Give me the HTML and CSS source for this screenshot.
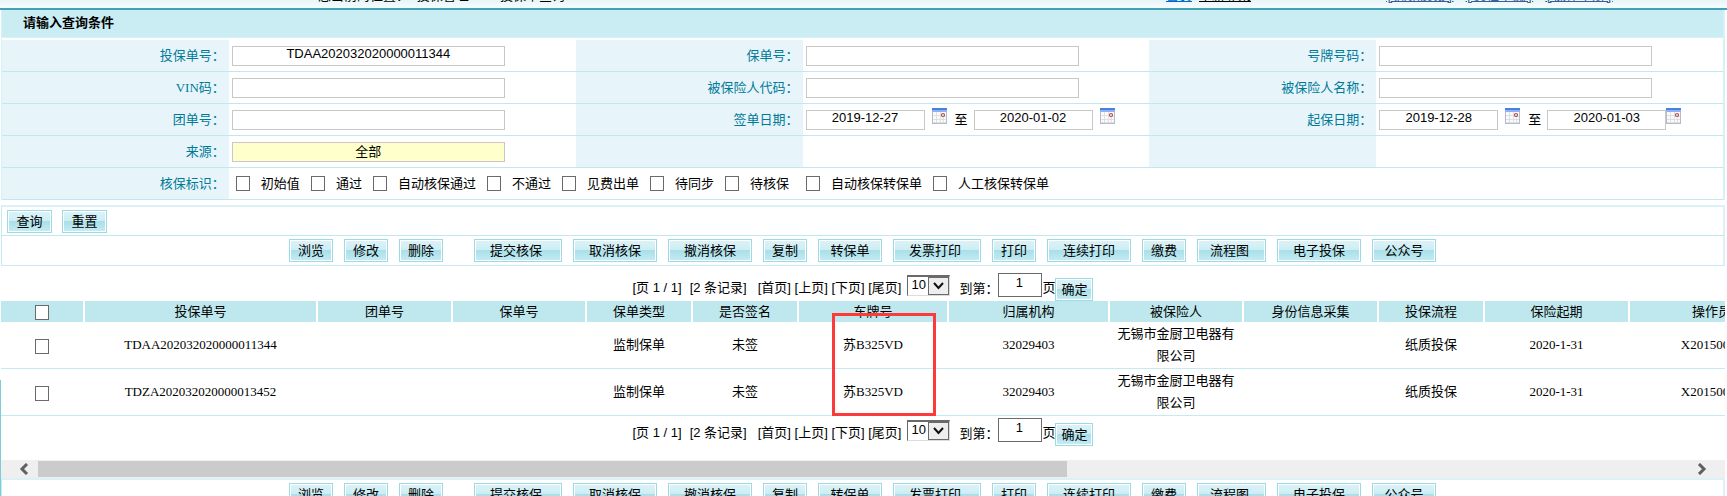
FILE: index.html
```html
<!DOCTYPE html>
<html lang="zh-CN">
<head>
  <meta charset="UTF-8">
  <meta name="viewport" content="width=device-width, initial-scale=1.0">
  <title>投保单查询</title>
  <link rel="stylesheet" href="styles.css">
</head>
<body>
  <svg class="defs" aria-hidden="true">
    <symbol id="calendar" viewBox="0 0 15 16">
      <rect width="15" height="16" fill="#b4bccb"/>
      <rect x="1" y="3" width="13" height="12" fill="#e0e0e0"/>
      <path d="M1 4h3v3H1zM5 4h3v3H5zM9 4h5v4H9zM1 8h3v3H1zM5 8h3v3H5zM9 9h2v2H9zM12 9h2v2h-2zM1 12h3v2H1zM5 12h3v2H5zM9 12h2v2H9zM12 12h2v2h-2z" fill="#fafafa"/>
      <rect width="15" height="2" fill="#4a80e4"/>
      <rect y="2" width="15" height="2" fill="#8db2f2"/>
      <circle cx="11" cy="7" r="1.500" fill="#fff" stroke="#b04a4a" stroke-width="1.200"/>
    </symbol>
  </svg>

  <div class="topbar">
    <div class="location">您当前的位置： 投保管理 &gt;&gt; 投保单查询</div>
    <div class="nav"><a href="#" class="home">首页</a><a href="#" class="relogin">重新登录</a></div>
    <div class="links"><a href="#">[意见反馈]</a><a href="#">[文档下载]</a><a href="#">[操作手册]</a></div>
  </div>

  <form class="panel">
    <h1 class="panel-title">请输入查询条件</h1>
    <div class="grid">
      <label class="name" for="proposalNo">投保单号：</label>
      <div class="value"><input class="text" id="proposalNo" type="text" value="TDAA202032020000011344"></div>
      <label class="name" for="policyNo">保单号：</label>
      <div class="value"><input class="text" id="policyNo" type="text"></div>
      <label class="name" for="plateNo">号牌号码：</label>
      <div class="value"><input class="text" id="plateNo" type="text"></div>

      <label class="name" for="vin"><span class="latin">VIN</span>码：</label>
      <div class="value"><input class="text" id="vin" type="text"></div>
      <label class="name" for="insuredCode">被保险人代码：</label>
      <div class="value"><input class="text" id="insuredCode" type="text"></div>
      <label class="name" for="insuredName">被保险人名称：</label>
      <div class="value"><input class="text" id="insuredName" type="text"></div>

      <label class="name" for="groupNo">团单号：</label>
      <div class="value"><input class="text" id="groupNo" type="text"></div>
      <label class="name" for="signStart">签单日期：</label>
      <div class="value">
        <input class="text date" id="signStart" type="text" value="2019-12-27">
        <svg class="cal"><use href="#calendar"/></svg>
        <label class="to" for="signEnd">至</label>
        <input class="text date" id="signEnd" type="text" value="2020-01-02">
        <svg class="cal"><use href="#calendar"/></svg>
      </div>
      <label class="name" for="startFrom">起保日期：</label>
      <div class="value">
        <input class="text date" id="startFrom" type="text" value="2019-12-28">
        <svg class="cal"><use href="#calendar"/></svg>
        <label class="to" for="startTo">至</label>
        <input class="text date" id="startTo" type="text" value="2020-01-03">
        <svg class="cal tight"><use href="#calendar"/></svg>
      </div>

      <label class="name" for="source">来源：</label>
      <div class="value"><input class="text source" id="source" type="text" value="全部"></div>
      <div class="name"></div>
      <div class="value"></div>
      <div class="name"></div>
      <div class="value"></div>

      <div class="name">核保标识：</div>
      <div class="value flags">
        <label><input type="checkbox">初始值</label>
        <label><input type="checkbox">通过</label>
        <label><input type="checkbox">自动核保通过</label>
        <label><input type="checkbox">不通过</label>
        <label><input type="checkbox">见费出单</label>
        <label><input type="checkbox">待同步</label>
        <label class="wide"><input type="checkbox">待核保</label>
        <label><input type="checkbox">自动核保转保单</label>
        <label><input type="checkbox">人工核保转保单</label>
      </div>
    </div>
  </form>

  <div class="toolbar">
    <div class="query">
      <button type="button" class="btn">查询</button>
      <button type="button" class="btn">重置</button>
    </div>
    <div class="actions">
      <button type="button" class="btn">浏览</button>
      <button type="button" class="btn">修改</button>
      <button type="button" class="btn last">删除</button>
      <button type="button" class="btn w4 trail">提交核保</button>
      <button type="button" class="btn w4">取消核保</button>
      <button type="button" class="btn w4">撤消核保</button>
      <button type="button" class="btn">复制</button>
      <button type="button" class="btn w3">转保单</button>
      <button type="button" class="btn w4 trail">发票打印</button>
      <button type="button" class="btn">打印</button>
      <button type="button" class="btn w4">连续打印</button>
      <button type="button" class="btn">缴费</button>
      <button type="button" class="btn w3 trail">流程图</button>
      <button type="button" class="btn w4">电子投保</button>
      <button type="button" class="btn w3">公众号</button>
    </div>
  </div>

  <div class="result">
    <div class="pager pager-top">
      <span class="count">[页 1 / 1]</span>
      <span class="total">[2 条记录]</span>
      <span class="pages">[首页] [上页] [下页] [尾页]</span>
      <select aria-label="每页条数"><option>10</option></select>
      <label class="goto" for="pageTop">到第：</label>
      <input class="page" id="pageTop" type="text" value="1">
      <span>页</span>
      <button type="button" class="btn ok">确定</button>
    </div>

    <div class="table-wrap">
      <table>
        <colgroup>
          <col class="c-check"><col class="c-proposal"><col class="c-group"><col class="c-policy">
          <col class="c-small"><col class="c-small"><col class="c-plate"><col class="c-org">
          <col class="c-policy"><col class="c-group"><col class="c-small"><col class="c-start"><col class="c-user">
        </colgroup>
        <thead>
          <tr>
            <th><input type="checkbox" aria-label="全选"></th>
            <th>投保单号</th>
            <th>团单号</th>
            <th>保单号</th>
            <th>保单类型</th>
            <th>是否签名</th>
            <th>车牌号</th>
            <th>归属机构</th>
            <th>被保险人</th>
            <th>身份信息采集</th>
            <th>投保流程</th>
            <th>保险起期</th>
            <th>操作员</th>
          </tr>
        </thead>
        <tbody>
          <tr>
            <td><input type="checkbox" aria-label="选择"></td>
            <td>TDAA202032020000011344</td>
            <td></td>
            <td></td>
            <td>监制保单</td>
            <td>未签</td>
            <td>苏B325VD</td>
            <td>32029403</td>
            <td>无锡市金厨卫电器有限公司</td>
            <td></td>
            <td>纸质投保</td>
            <td>2020-1-31</td>
            <td>X20150001</td>
          </tr>
          <tr>
            <td><input type="checkbox" aria-label="选择"></td>
            <td>TDZA202032020000013452</td>
            <td></td>
            <td></td>
            <td>监制保单</td>
            <td>未签</td>
            <td>苏B325VD</td>
            <td>32029403</td>
            <td>无锡市金厨卫电器有限公司</td>
            <td></td>
            <td>纸质投保</td>
            <td>2020-1-31</td>
            <td>X20150001</td>
          </tr>
        </tbody>
      </table>
      <div class="mark"></div>
    </div>

    <div class="pager pager-bottom">
      <span class="count">[页 1 / 1]</span>
      <span class="total">[2 条记录]</span>
      <span class="pages">[首页] [上页] [下页] [尾页]</span>
      <select aria-label="每页条数"><option>10</option></select>
      <label class="goto" for="pageBottom">到第：</label>
      <input class="page" id="pageBottom" type="text" value="1">
      <span>页</span>
      <button type="button" class="btn ok">确定</button>
    </div>

    <div class="scrollbar">
      <svg class="arrow" viewBox="0 0 10 12"><path d="M8 1L3 6l5 5"/></svg>
      <div class="track"><div class="thumb"></div></div>
      <svg class="arrow" viewBox="0 0 10 12"><path d="M2 1l5 5-5 5"/></svg>
    </div>
    <div class="side-line"></div>
  </div>

  <div class="toolbar bottom">
    <div class="actions">
      <button type="button" class="btn">浏览</button>
      <button type="button" class="btn">修改</button>
      <button type="button" class="btn last">删除</button>
      <button type="button" class="btn w4 trail">提交核保</button>
      <button type="button" class="btn w4">取消核保</button>
      <button type="button" class="btn w4">撤消核保</button>
      <button type="button" class="btn">复制</button>
      <button type="button" class="btn w3">转保单</button>
      <button type="button" class="btn w4 trail">发票打印</button>
      <button type="button" class="btn">打印</button>
      <button type="button" class="btn w4">连续打印</button>
      <button type="button" class="btn">缴费</button>
      <button type="button" class="btn w3 trail">流程图</button>
      <button type="button" class="btn w4">电子投保</button>
      <button type="button" class="btn w3">公众号</button>
    </div>
  </div>
</body>
</html>
```
FILE: styles.css
```css
* {
  box-sizing: border-box;
}
html {
  height: 100%;
  overflow: hidden;
}
body {
  margin: 0;
  height: 100%;
  overflow: hidden;
  background-color: white;
  color: black;
  font-family: "Liberation Sans", "Noto Sans CJK SC", sans-serif;
  font-size: 13px;
  line-height: 20px;
}
.defs {
  display: none;
}
input, select, button {
  margin: 0;
  font: inherit;
  color: inherit;
}

/* top bar, scrolled almost out of view */
.topbar {
  display: flex;
  align-items: flex-end;
  height: 10px;
  padding-bottom: 1px;
  overflow: hidden;
  background: linear-gradient(#e6f5f8, #f8fdfe);
  border-bottom: 2px solid #3fa3b3;
  font-family: "Liberation Mono", "Noto Sans CJK SC", monospace;
}
.location {
  width: 1166px;
  padding-left: 318px;
}
.nav {
  display: flex;
  gap: 7px;
  width: 220px;
}
.links {
  display: flex;
  gap: 12px;
}
.links a {
  color: #3b5f93;
}
.home {
  color: #0066cc;
}
.relogin {
  color: black;
}

/* query form */
.panel {
  margin: 0 2px 0 1px;
  border: solid #d8f1f6;
  border-width: 0 2px 0 1px;
}
.panel-title {
  margin: 0 0 2px;
  padding: 3px 0 4px 21px;
  border-bottom: 1px solid #d8f1f6;
  background-color: #caecf3;
  font-size: 13px;
  line-height: 20px;
}
.grid {
  display: grid;
  grid-template-columns: 227fr 347fr 227fr 347fr 227fr 347fr;
  grid-auto-rows: 32px;
}
.name {
  display: flex;
  align-items: center;
  justify-content: flex-end;
  padding-right: 4px;
  border-bottom: 1px solid #bfe8ef;
  background-color: #e7f5fa;
  color: #007a99;
}
.latin {
  font-family: "Liberation Serif", serif;
}
.value {
  display: flex;
  align-items: center;
  padding-left: 3px;
  border-bottom: 1px solid #bfe8ef;
}
.text {
  width: 273px;
  height: 20px;
  padding: 0 0 3px;
  border: 1px solid #c8c8c8;
  background-color: white;
  text-align: center;
}
.source {
  background-color: #ffffcc;
  padding: 0;
}
.date {
  width: 119px;
}
.cal {
  width: 15px;
  height: 16px;
  margin: 0 8px 8px 7px;
}
.cal.tight {
  margin-left: 0;
}
.to {
  margin-right: 6px;
}
.flags {
  grid-column: span 5;
  gap: 11px;
  padding-left: 7px;
}
.flags label {
  display: flex;
  align-items: center;
  gap: 11px;
}
.flags .wide {
  margin-right: 6px;
}
input[type="checkbox"] {
  appearance: none;
  width: 14px;
  height: 15px;
  border: 1px solid #6a6a6a;
  background-color: white;
  vertical-align: middle;
}
input[type="checkbox"]:checked {
  background-color: #3fa3b3;
}

/* buttons */
.toolbar {
  margin: 5px 2px 0 1px;
  border: 1px solid #c6eaf1;
  border-top: 2px solid #dcf1f7;
  border-right: 2px solid #dcf1f7;
}
.query {
  display: flex;
  gap: 10px;
  padding: 3px 5px 2px;
  border-bottom: 1px solid #bfe8ef;
}
.actions {
  display: flex;
  justify-content: center;
  gap: 11px;
  padding: 3px 0;
}
.btn {
  flex: none;
  width: 44px;
  height: 23px;
  padding: 0;
  border: 1px solid #9adbe5;
  background: linear-gradient(#dcf3f8 0, #cdeef4 45%, #a9dfe9 50%, #c6ecf3 100%);
  box-shadow: inset 0 0 0 1px white;
  line-height: 20px;
  text-align: center;
  cursor: pointer;
}
.btn:hover {
  border-color: #3fa3b3;
}
.query .btn {
  width: 45px;
}
.w3 {
  width: 64px;
}
.w4 {
  width: 84px;
}
.trail {
  width: 88px;
  padding-right: 4px;
}
.w3.trail {
  width: 69px;
}
.last {
  margin-right: 20px;
}

/* result list */
.result {
  position: relative;
  margin: 0 2px 0 1px;
}
.pager {
  display: flex;
  align-items: flex-start;
  justify-content: center;
  line-height: 30px;
}
.pager-top {
  height: 35px;
  padding-top: 7px;
}
.pager-bottom {
  height: 44px;
  padding-top: 2px;
}
.count {
  margin-right: 8px;
}
.total {
  margin-right: 11px;
}
.pages {
  margin-right: 6px;
}
.pager select {
  width: 43px;
  height: 21px;
  margin-top: 2px;
  padding: 0 3px 3px;
  appearance: none;
  border: 1px solid #dcdcdc;
  border-top: 2px solid #6a6a6a;
  border-left: 1px solid #6a6a6a;
  border-radius: 0;
  background: white url("data:image/svg+xml,%3Csvg xmlns='http://www.w3.org/2000/svg' width='21' height='18'%3E%3Crect x='.5' y='.5' width='20' height='17' fill='%23eee' stroke='%236a6a6a'/%3E%3Cpath d='M6 6l4.500 5L15 6' fill='none' stroke='%23111' stroke-width='2'/%3E%3C/svg%3E") right center no-repeat;
  line-height: 16px;
}
.goto {
  margin-left: 9px;
  font-family: "Noto Sans CJK TC", sans-serif;
}
.page {
  width: 44px;
  height: 24px;
  padding: 0 2px 5px 0;
  border: 1px solid #6a6a6a;
  text-align: center;
}
.ok {
  width: 38px;
  margin-top: 5px;
}
.table-wrap {
  position: relative;
  overflow: hidden;
}
table {
  width: 1794px;
  table-layout: fixed;
  border-collapse: separate;
  border-spacing: 0;
  font-family: "Liberation Serif", "Noto Sans CJK SC", sans-serif;
  line-height: 22px;
  text-align: center;
}
.c-check { width: 84px; }
.c-proposal { width: 233px; }
.c-group { width: 135px; }
.c-policy { width: 134px; }
.c-small { width: 106px; }
.c-plate { width: 150px; }
.c-org { width: 161px; }
.c-start { width: 145px; }
.c-user { width: 165px; }
th {
  height: 21px;
  padding: 0;
  border-right: 2px solid white;
  background-color: #bee8ee;
  font-weight: normal;
  line-height: 20px;
}
td {
  height: 47px;
  padding: 0 6px 0 4px;
  border-bottom: 1px solid #c6eaf1;
}
.mark {
  position: absolute;
  top: 12px;
  left: 831px;
  width: 104px;
  height: 103px;
  border: 3px solid #fc3a3a;
}
.scrollbar {
  display: flex;
  align-items: center;
  height: 18px;
  padding: 0 18px;
  background-color: #efefef;
}
.arrow {
  flex: none;
  width: 10px;
  height: 12px;
  fill: none;
  stroke: #606060;
  stroke-width: 3;
}
.track {
  flex: 1;
  padding: 0 0 0 9px;
}
.thumb {
  width: 62%;
  height: 16px;
  background-color: #cbcbcb;
}
.side-line {
  position: absolute;
  top: 114px;
  bottom: -40px;
  left: -1px;
  width: 1px;
  background-color: #7fcbd8;
}
.bottom {
  margin-top: 0;
}
```
